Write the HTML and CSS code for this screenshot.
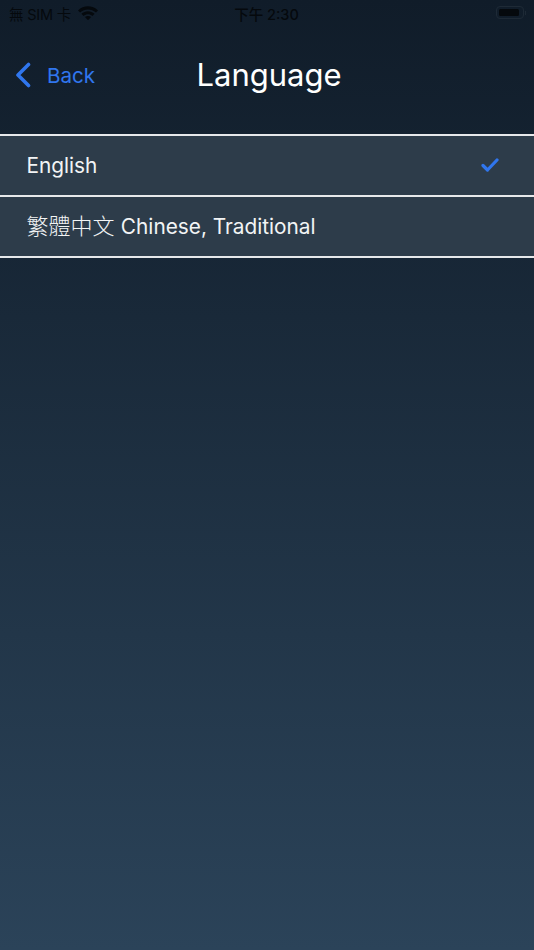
FILE: index.html
```html
<!DOCTYPE html>
<html lang="zh-Hant">
<head>
    <meta charset="UTF-8">
    <meta name="viewport" content="width=device-width, initial-scale=1.0">
    <title>Language</title>
    <link rel="stylesheet" href="styles.css">
</head>
<body>
    <!-- Status bar -->
    <div class="status-bar">
        <div class="status-left">
            <span>無 SIM 卡</span>
            <svg class="wifi" viewBox="0 0 20 14" width="20" height="14">
                <path d="M0 4.4 C5.6 -1.2 14.4 -1.2 20 4.4 L17.9 6.6 C13.4 2.3 6.6 2.3 2.1 6.6 Z" fill="#05090d"/>
                <path d="M3.4 7.8 C7.2 4.3 12.8 4.3 16.6 7.8 L14.4 10 C11.8 7.7 8.2 7.7 5.6 10 Z" fill="#05090d"/>
                <path d="M6.9 11.1 C8.7 9.7 11.3 9.7 13.1 11.1 L10 14.2 Z" fill="#05090d"/>
            </svg>
        </div>
        <div class="status-time">下午 2:30</div>
        <div class="status-right">
            <div class="battery"><div class="battery-level"></div></div>
            <div class="battery-tip"></div>
        </div>
    </div>

    <!-- Navigation -->
    <div class="nav">
        <div class="back">
            <svg class="chevron" viewBox="0 0 16 26" width="16" height="26">
                <path d="M13.5 2.5 L3 13 L13.5 23.5" fill="none" stroke="#3076ee" stroke-width="3.6" stroke-linecap="round" stroke-linejoin="round"/>
            </svg>
            <span>Back</span>
        </div>
        <h1 class="title">Language</h1>
    </div>

    <!-- Language list -->
    <div class="list">
        <div class="row">
            <span class="label">English</span>
            <svg class="check" viewBox="0 0 18 16" width="18" height="16">
                <path d="M2 8.5 L6.5 13 L16 3" fill="none" stroke="#3076ee" stroke-width="3.2" stroke-linecap="round" stroke-linejoin="round"/>
            </svg>
        </div>
        <div class="row">
            <span class="label"><span class="cjk">繁體中文</span> Chinese, Traditional</span>
        </div>
    </div>
</body>
</html>
```

FILE: styles.css
```css
html, body {
    height: 100%;
}

body {
    margin: 0;
    background: linear-gradient(to bottom, #101c29 0%, #2b4359 100%);
    font-family: 'Inter', 'Noto Sans CJK TC', sans-serif;
    color: #ffffff;
    overflow: hidden;
}

/* Status bar */
.status-bar {
    display: grid;
    grid-template-columns: 1fr auto 1fr;
    align-items: center;
    height: 26px;
    padding: 0 8px 0 9px;
    font-size: 14.5px;
    color: #05090d;
}

.status-left {
    display: flex;
    align-items: center;
    gap: 7px;
}

.status-left span {
    letter-spacing: -0.2px;
}

.status-time {
    font-weight: 500;
    margin-left: -2px;
}

.status-right {
    display: flex;
    align-items: center;
    justify-content: flex-end;
    margin-top: -1px;
}

.battery {
    width: 28px;
    height: 13px;
    padding: 2px;
    box-sizing: border-box;
    border: 1px solid #1e2a36;
    border-radius: 4px;
}

.battery-level {
    width: 20px;
    height: 100%;
    background-color: #05090d;
    border-radius: 1.5px;
}

.battery-tip {
    width: 1.5px;
    height: 4px;
    margin-left: 1px;
    background-color: #1e2a36;
}

/* Navigation */
.nav {
    position: relative;
    display: flex;
    align-items: center;
    justify-content: center;
    height: 96px;
}

.back {
    position: absolute;
    left: 15px;
    top: 36px;
    display: flex;
    align-items: center;
    gap: 16px;
    font-size: 20.6px;
    color: #3076ee;
}

.title {
    margin: 0 0 0 4px;
    font-size: 31px;
    font-weight: 400;
}

/* List */
.list {
    margin-top: 12px;
    border-top: 2px solid #e6e8ea;
}

.row {
    display: flex;
    align-items: center;
    justify-content: space-between;
    height: 59px;
    padding: 0 35px 0 26.5px;
    background-color: #2d3c4a;
    border-bottom: 2px solid #e6e8ea;
    font-size: 20.8px;
}

.label {
    color: #f2f4f5;
    line-height: 24px;
}

.cjk {
    font-size: 22px;
    font-weight: 300;
    line-height: 20px;
    margin-right: 0.5px;
}

.check {
    margin-top: -2px;
}
```
